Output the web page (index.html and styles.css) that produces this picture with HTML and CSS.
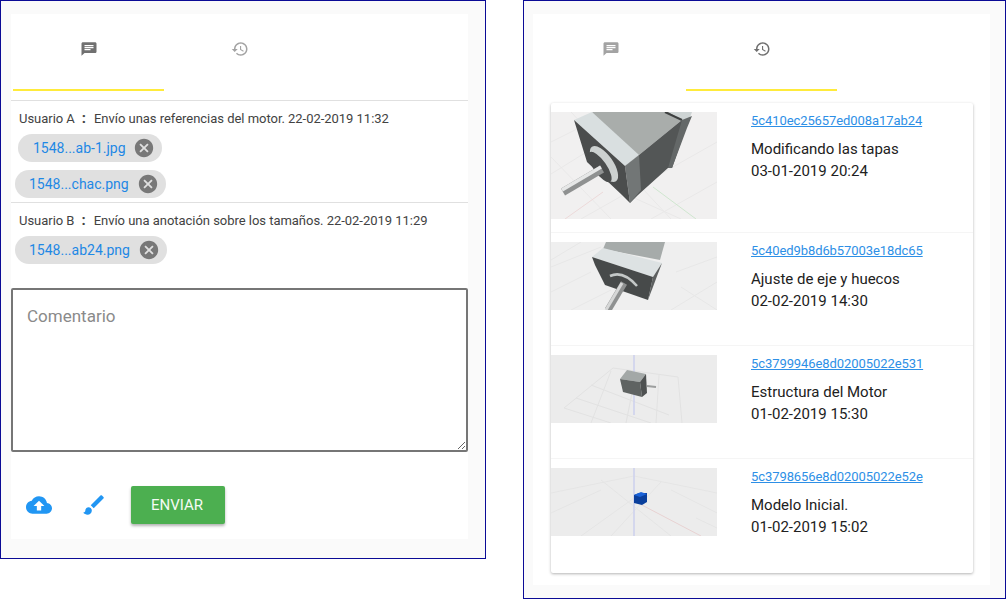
FILE: index.html
```html
<!DOCTYPE html>
<html lang="es">
<head>
    <meta charset="UTF-8">
    <meta name="viewport" content="width=device-width, initial-scale=1.0">
    <title>Comentarios e historial</title>
    <link rel="stylesheet" href="styles.css">
</head>
<body>
<div class="desktop">

    <section class="panel panel-comments">
        <div class="card">
            <nav class="tabs tabs-lined">
                <button class="tab active">
                    <svg class="tab-icon tab-icon-chat" viewBox="0 0 24 24" preserveAspectRatio="none"><path d="M20 2H4c-1.1 0-1.99.9-1.99 2L2 22l4-4h14c1.1 0 2-.9 2-2V4c0-1.1-.9-2-2-2zM6 9h12v2H6V9zm8 5H6v-2h8v2zm4-6H6V6h12v2z"/></svg>
                </button>
                <button class="tab">
                    <svg class="tab-icon" viewBox="0 0 24 24"><path d="M13 3c-4.97 0-9 4.03-9 9H1l3.89 3.89.07.14L9 12H6c0-3.87 3.13-7 7-7s7 3.13 7 7-3.13 7-7 7c-1.93 0-3.68-.79-4.94-2.06l-1.42 1.42C8.27 19.99 10.51 21 13 21c4.97 0 9-4.03 9-9s-4.03-9-9-9zm-1 5v5l4.28 2.54.72-1.21-3.5-2.08V8H12z"/></svg>
                </button>
            </nav>

            <div class="message">
                <p class="message-text">Usuario A<b class="colon">:</b>Envío unas referencias del motor. 22-02-2019 11:32</p>
                <div class="chip chip-inset">
                    <a class="chip-name">1548...ab-1.jpg</a>
                    <svg class="chip-close" viewBox="0 0 24 24"><path d="M12 2C6.47 2 2 6.47 2 12s4.47 10 10 10 10-4.47 10-10S17.53 2 12 2zm5 13.59L15.59 17 12 13.41 8.41 17 7 15.59 10.59 12 7 8.41 8.41 7 12 10.59 15.59 7 17 8.41 13.41 12 17 15.59z"/></svg>
                </div>
                <div class="chip">
                    <a class="chip-name">1548...chac.png</a>
                    <svg class="chip-close" viewBox="0 0 24 24"><path d="M12 2C6.47 2 2 6.47 2 12s4.47 10 10 10 10-4.47 10-10S17.53 2 12 2zm5 13.59L15.59 17 12 13.41 8.41 17 7 15.59 10.59 12 7 8.41 8.41 7 12 10.59 15.59 7 17 8.41 13.41 12 17 15.59z"/></svg>
                </div>
            </div>

            <div class="message message-last">
                <p class="message-text">Usuario B<b class="colon">:</b>Envío una anotación sobre los tamaños. 22-02-2019 11:29</p>
                <div class="chip">
                    <a class="chip-name">1548...ab24.png</a>
                    <svg class="chip-close" viewBox="0 0 24 24"><path d="M12 2C6.47 2 2 6.47 2 12s4.47 10 10 10 10-4.47 10-10S17.53 2 12 2zm5 13.59L15.59 17 12 13.41 8.41 17 7 15.59 10.59 12 7 8.41 8.41 7 12 10.59 15.59 7 17 8.41 13.41 12 17 15.59z"/></svg>
                </div>
            </div>

            <textarea class="comment-box" placeholder="Comentario"></textarea>

            <div class="actions">
                <svg class="action-icon" viewBox="0 0 24 24"><path d="M19.35 10.04C18.67 6.59 15.64 4 12 4 9.11 4 6.6 5.64 5.35 8.04 2.34 8.36 0 10.91 0 14c0 3.31 2.69 6 6 6h13c2.76 0 5-2.24 5-5 0-2.64-2.05-4.78-4.65-4.96zM14 13v4h-4v-4H7l5-5 5 5h-3z"/></svg>
                <svg class="action-icon" viewBox="0 0 24 24"><path d="M7 14c-1.66 0-3 1.34-3 3 0 1.31-1.16 2-2 2 .92 1.22 2.49 2 4 2 2.21 0 4-1.79 4-4 0-1.66-1.34-3-3-3zm13.71-9.37l-1.34-1.34c-.39-.39-1.02-.39-1.41 0L9 12.25 11.75 15l8.96-8.96c.39-.39.39-1.02 0-1.41z"/></svg>
                <button class="send-button">ENVIAR</button>
            </div>
        </div>
    </section>

    <section class="panel panel-history">
        <div class="card card-tall">
            <nav class="tabs">
                <button class="tab">
                    <svg class="tab-icon tab-icon-chat" viewBox="0 0 24 24" preserveAspectRatio="none"><path d="M20 2H4c-1.1 0-1.99.9-1.99 2L2 22l4-4h14c1.1 0 2-.9 2-2V4c0-1.1-.9-2-2-2zM6 9h12v2H6V9zm8 5H6v-2h8v2zm4-6H6V6h12v2z"/></svg>
                </button>
                <button class="tab active">
                    <svg class="tab-icon" viewBox="0 0 24 24"><path d="M13 3c-4.97 0-9 4.03-9 9H1l3.89 3.89.07.14L9 12H6c0-3.87 3.13-7 7-7s7 3.13 7 7-3.13 7-7 7c-1.93 0-3.68-.79-4.94-2.06l-1.42 1.42C8.27 19.99 10.51 21 13 21c4.97 0 9-4.03 9-9s-4.03-9-9-9zm-1 5v5l4.28 2.54.72-1.21-3.5-2.08V8H12z"/></svg>
                </button>
            </nav>

            <div class="versions">
                <article class="version version-first">
                    <div class="thumb thumb-large">
                        <svg viewBox="0 0 166 107" width="166" height="107">
                            <rect width="166" height="107" fill="#f1f0f0"/>
                            <path d="M0 30L60 0M0 62L100 0M30 107L166 30M100 107L166 70M20 0L120 107M70 80L130 107M0 45L60 107" stroke="#e9e8e8" fill="none"/>
                            <path d="M52 80L14 107" stroke="#ecd9d9" fill="none"/>
                            <path d="M102 75L145 107" stroke="#cfe6cf" fill="none"/>
                            <path d="M41 0H118L131 8L88 43L74 54Z" fill="#a9adab"/>
                            <path d="M23 8L41 0L88 43L74 54Z" fill="#d9dfe0"/>
                            <path d="M118 0H141L136 13L131 8Z" fill="#ced4d4"/>
                            <path d="M114 0L131 8" stroke="#3d3f3f" stroke-width="2"/>
                            <path d="M88 43L131 8L136 13L121 56L117 56L87 83L79 91Z" fill="#535656"/>
                            <path d="M131 8L141 4L136 16L121 56L117 56Z" fill="#646868"/>
                            <path d="M74 54L88 43L90 78L79 91Z" fill="#727676"/>
                            <path d="M23 8L74 54L79 91L71 83L36 50Z" fill="#4b4d4d"/>
                            <ellipse cx="53" cy="52" rx="9" ry="21" transform="rotate(-35 53 52)" fill="#cdd1d0"/>
                            <ellipse cx="49" cy="55" rx="6.5" ry="18" transform="rotate(-35 49 55)" fill="#4b4d4d"/>
                            <path d="M12 80L51 57" stroke="#8f9191" stroke-width="8"/>
                            <path d="M11 78L50 55" stroke="#e6e7e7" stroke-width="3.5"/>
                        </svg>
                    </div>
                    <div class="version-info">
                        <a class="version-hash">5c410ec25657ed008a17ab24</a>
                        <p class="version-text">Modificando las tapas<br>03-01-2019 20:24</p>
                    </div>
                </article>

                <article class="version">
                    <div class="thumb">
                        <svg viewBox="0 0 166 68" width="166" height="68">
                            <rect width="166" height="68" fill="#efefef"/>
                            <path d="M0 25L50 5M0 50L40 30M120 68L166 40M125 30L166 15M30 0L0 18M130 45L166 68M20 68L60 48" stroke="#e7e7e7" fill="none"/>
                            <path d="M55 0H114L109 18L52 7Z" fill="#a6abaa"/>
                            <path d="M41 15L52 6L111 21L102 35Z" fill="#dde2e3"/>
                            <path d="M102 35L111 21L97 58Z" fill="#5d6060"/>
                            <path d="M41 15L102 35L97 58L54 43L44 23Z" fill="#474a4a"/>
                            <path d="M59 34Q72 28 86 44" stroke="#c4c8c7" stroke-width="2.5" fill="none"/>
                            <path d="M57 68L73 41" stroke="#8f9191" stroke-width="7"/>
                            <path d="M55 68L71 41" stroke="#d6d7d7" stroke-width="3"/>
                        </svg>
                    </div>
                    <div class="version-info">
                        <a class="version-hash">5c40ed9b8d6b57003e18dc65</a>
                        <p class="version-text">Ajuste de eje y huecos<br>02-02-2019 14:30</p>
                    </div>
                </article>

                <article class="version">
                    <div class="thumb">
                        <svg viewBox="0 0 166 68" width="166" height="68">
                            <rect width="166" height="68" fill="#ececec"/>
                            <path d="M13 53L62 13L127 22L131 68M13 53L60 68M25 43L100 68M40 30L118 60M60 16L40 68M85 18L75 68M108 20L105 68" stroke="#e2e2e2" fill="none"/>
                            <path d="M83 0V60" stroke="#ccd0ee" stroke-width="1.5"/>
                            <path d="M69 24L76 15L95 19L89 27Z" fill="#a3a8a7"/>
                            <path d="M69 24L89 27L91 42L72 37Z" fill="#5f6362"/>
                            <path d="M89 27L95 19L96 38L91 42Z" fill="#4e5151"/>
                            <path d="M96 31L105 32" stroke="#9c9e9e" stroke-width="2"/>
                        </svg>
                    </div>
                    <div class="version-info">
                        <a class="version-hash">5c3799946e8d02005022e531</a>
                        <p class="version-text">Estructura del Motor<br>01-02-2019 15:30</p>
                    </div>
                </article>

                <article class="version">
                    <div class="thumb">
                        <svg viewBox="0 0 166 68" width="166" height="68">
                            <rect width="166" height="68" fill="#ececec"/>
                            <path d="M0 25L83 8L166 25M0 45L50 22M30 68L83 30M60 68L110 14M166 45L120 22M120 68L50 12M166 60L145 50" stroke="#e5e5e5" fill="none"/>
                            <path d="M89 36L150 68" stroke="#e8d2d2" fill="none"/>
                            <path d="M83 0V68" stroke="#ccd0ee" stroke-width="1.5"/>
                            <path d="M83 27L88 25H96V34L91 37L83 35Z" fill="#0a3f9c"/>
                            <path d="M83 27L89 29L96 26L90 24Z" fill="#1a62d8"/>
                        </svg>
                    </div>
                    <div class="version-info">
                        <a class="version-hash">5c3798656e8d02005022e52e</a>
                        <p class="version-text">Modelo Inicial.<br>01-02-2019 15:02</p>
                    </div>
                </article>
            </div>
        </div>
    </section>

</div>
</body>
</html>
```

FILE: styles.css
```css
* {
  box-sizing: border-box;
}

body {
  margin: 0;
  background: #fff;
  font-family: Roboto, "Liberation Sans", sans-serif;
}

.desktop {
  display: flex;
  align-items: flex-start;
  gap: 37px;
}

.panel {
  border: 1px solid #0b0b96;
  background: #fafafa;
  padding-top: 13px;
}

.panel-comments {
  width: 486px;
  height: 559px;
  padding-left: 10px;
}

.panel-history {
  width: 483px;
  height: 599px;
  padding-left: 9px;
}

.card {
  width: 457px;
  height: 525px;
  background: #fff;
}

.card-tall {
  height: 571px;
}

.tabs {
  display: flex;
  padding-left: 2px;
}

.tabs-lined {
  height: 87px;
  border-bottom: 1px solid #e0e0e0;
}

.tab {
  width: 151px;
  height: 77px;
  padding: 26px 0 0;
  border: none;
  border-bottom: 2px solid transparent;
  background: transparent;
  display: flex;
  justify-content: center;
  align-items: flex-start;
}

.tab.active {
  border-bottom-color: #ffeb3b;
}

.tab-icon {
  width: 18px;
  height: 18px;
  fill: #a3a3a3;
}

.tab-icon-chat {
  height: 16px;
  margin-top: 1px;
}

.tab.active .tab-icon {
  fill: #707070;
}

.message {
  padding: 9px 0 4px 4px;
  border-bottom: 1px solid #e0e0e0;
}

.message-last {
  border-bottom: none;
  padding-bottom: 0;
}

.message-text {
  margin: 0 0 6px;
  padding-left: 4px;
  font-size: 13px;
  line-height: 18px;
  letter-spacing: -.03px;
  color: #424242;
}

.colon {
  margin: 0 8px 0 7px;
  font-size: 15px;
  line-height: 0;
  font-weight: 700;
}

.chip {
  display: flex;
  align-items: center;
  width: max-content;
  height: 28px;
  padding: 0 7px 0 14px;
  margin-bottom: 8px;
  border-radius: 14px;
  background: #e0e0e0;
}

.chip:last-child {
  margin-bottom: 0;
}

.chip-inset {
  margin-left: 3px;
  padding-left: 15px;
}

.chip-inset .chip-close {
  margin-left: 7px;
}

.chip-name {
  font-size: 14px;
  color: #1e88e5;
}

.chip-close {
  width: 22px;
  height: 22px;
  margin-left: 8px;
  fill: #787878;
}

.comment-box {
  display: block;
  width: 457px;
  height: 164px;
  margin-top: 24px;
  padding: 16px 14px;
  border: 2px solid #767676;
  border-radius: 2px;
  font-family: inherit;
  font-size: 17px;
  line-height: 20px;
}

.comment-box::placeholder {
  color: #8a8a8a;
}

.actions {
  display: flex;
  align-items: center;
  gap: 29px;
  padding: 34px 0 0 15px;
}

.action-icon {
  width: 26px;
  height: 26px;
  fill: #2196f3;
}

.send-button {
  width: 94px;
  height: 38px;
  margin-left: -5px;
  padding: 0 2px 0 0;
  border: none;
  border-radius: 2px;
  background: #4caf50;
  color: #f4fbf4;
  font-family: inherit;
  font-size: 15px;
  font-weight: 400;
  box-shadow: 0 2px 3px rgba(0, 0, 0, .3);
}

.versions {
  width: 422px;
  height: 470px;
  margin: 12px 0 0 18px;
  border-radius: 2px;
  box-shadow: 0 1px 3px rgba(0, 0, 0, .3);
}

.version {
  display: flex;
  gap: 34px;
  height: 113px;
  padding-top: 9px;
  border-top: 1px solid #f5f5f5;
}

.version-first {
  height: 129px;
  border-top: none;
}

.thumb {
  width: 166px;
  height: 68px;
  overflow: hidden;
}

.thumb-large {
  height: 107px;
}

.thumb svg {
  display: block;
  filter: blur(.5px);
}

.version-hash {
  display: block;
  font-size: 13px;
  line-height: 18px;
  letter-spacing: -.08px;
  color: #2d8fe6;
  text-decoration: underline;
}

.version-text {
  margin: 8px 0 0;
  font-size: 15px;
  line-height: 22px;
  color: #212121;
}
```
